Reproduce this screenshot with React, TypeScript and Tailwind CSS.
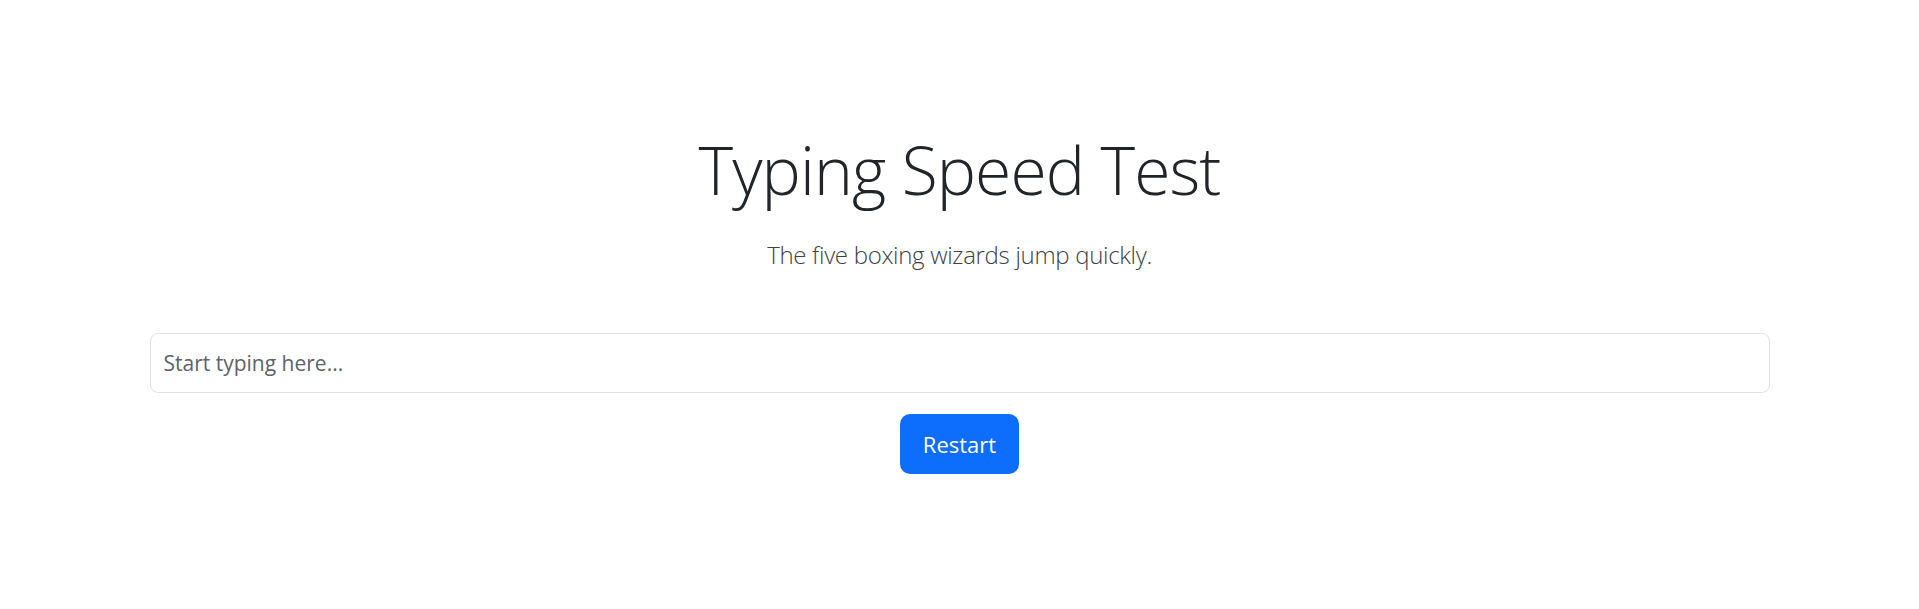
import React from "react";

export default function App() {
  return (
    <div className="min-h-[609px] w-full bg-white" style={{ fontFamily: '"Open Sans", "Noto Sans", sans-serif' }}>
      <div className="mx-auto flex w-[1620px] flex-col items-center pt-[129px]">
        <h1 className="text-center text-[66px] font-light leading-[80px] tracking-[-0.9px] text-[#212529]">Typing Speed Test</h1>
        <p className="mt-[27px] text-center text-[24px] font-light leading-[37px] tracking-[-0.3px] text-[#3d4246]">
          The five boxing wizards jump quickly.
        </p>
        <input
          type="text"
          placeholder="Start typing here..."
          className="mt-[60px] h-[60px] w-full rounded-[8px] border border-[#dee2e6] bg-white px-[13px] text-[21px] text-[#212529] outline-none placeholder:text-[#5c636a]"
        />
        <button className="mt-[21px] h-[60px] w-[119px] rounded-[10px] bg-[#0d6efd] text-[22px] text-white">
          Restart
        </button>
      </div>
    </div>
  );
}
